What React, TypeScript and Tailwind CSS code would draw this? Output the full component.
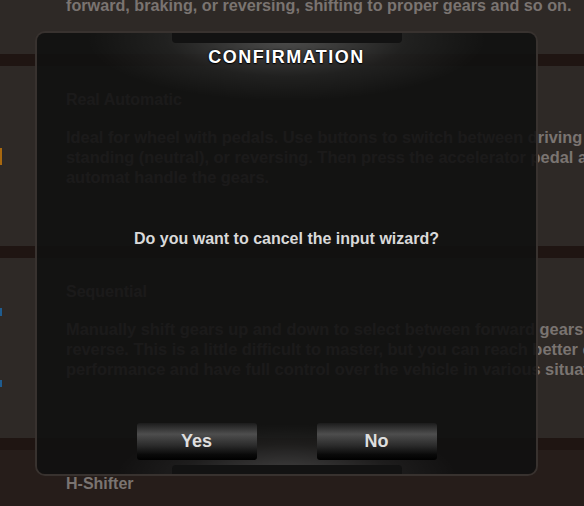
import React from 'react';

// Settings list sitting behind the dialog
const SECTIONS = [
  {
    title: 'Real Automatic',
    lines: [
      'Ideal for wheel with pedals. Use buttons to switch between driving forward,',
      'standing (neutral), or reversing. Then press the accelerator pedal and let the',
      'automat handle the gears.',
    ],
    bits: [{ top: 'mt-[82px]', h: 'h-[17px]', color: 'bg-[#a8680f]' }],
    bg: 'bg-[#2e2926]',
  },
  {
    title: 'Sequential',
    lines: [
      'Manually shift gears up and down to select between forward gears, neutral or',
      'reverse. This is a little difficult to master, but you can reach better control,',
      'performance and have full control over the vehicle in various situations.',
    ],
    bits: [
      { top: 'mt-[50px]', h: 'h-[8px]', color: 'bg-[#1f5c8f]' },
      { top: 'mt-[64px]', h: 'h-[7px]', color: 'bg-[#1f5c8f]' },
    ],
    bg: 'bg-[#2e2926]',
  },
  {
    title: 'H-Shifter',
    lines: [],
    bits: [],
    bg: 'bg-[#261d1a]',
  },
];

function DialogButton({ label }: { label: string }) {
  return (
    <button className="w-[120px] h-[37px] rounded-[3px] bg-[linear-gradient(to_bottom,#1c1c1c_0%,#4e4e4e_30%,#2c2c2c_60%,#0a0a0a_85%,#000_100%)] text-[18px] leading-[37px] font-bold text-[#dedede]">
      {label}
    </button>
  );
}

export default function App() {
  return (
    <div className="relative w-[584px] h-[506px] overflow-hidden bg-[#2e2926] font-['Liberation_Sans',Arial,sans-serif] font-bold">

      {/* tail of the previous entry */}
      <div className="h-[54px] pl-[66px] overflow-hidden">
        <p className="-mt-[5px] text-[16.2px] leading-[20px] text-[#7a7471] whitespace-nowrap">
          forward, braking, or reversing, shifting to proper gears and so on.
        </p>
      </div>

      {SECTIONS.map((s) => (
        <section key={s.title} className={s.bg}>
          <div className="h-[12px] bg-[#1f1512]" />
          <div className="flex h-[180px]">
            <div className="w-[2px] flex flex-col">
              {s.bits.map((b, i) => (
                <div key={i} className={`${b.top} ${b.h} ${b.color} w-[2px]`} />
              ))}
            </div>
            <div className="pl-[64px] pt-[24px] text-[#7a7471] whitespace-nowrap">
              <h3 className="text-[16px] leading-[20px]">{s.title}</h3>
              {s.lines.length > 0 && (
                <div className="mt-[17px] text-[16.4px] leading-[20px]">
                  {s.lines.map((l) => (
                    <p key={l}>{l}</p>
                  ))}
                </div>
              )}
            </div>
          </div>
        </section>
      ))}

      {/* Confirmation dialog */}
      <div className="absolute left-[35px] top-[31px] w-[503px] h-[445px] rounded-[10px] border-2 border-[#38322f] overflow-hidden">
        <div className="flex flex-col items-center h-full bg-[#111111]/90 bg-[radial-gradient(ellipse_200px_62px_at_50%_6px,rgba(255,255,255,0.25),rgba(255,255,255,0.06)_60%,transparent),radial-gradient(ellipse_170px_50px_at_50%_100%,rgba(255,255,255,0.2),rgba(255,255,255,0.05)_60%,transparent)]">
          <div className="w-[230px] h-[10px] rounded-b-[4px] bg-[#121212]" />
          <h2 className="mt-[3px] text-[18px] leading-[22px] tracking-[1.5px] text-white [text-shadow:0_0_2px_#000,0_1px_1px_#000]">
            CONFIRMATION
          </h2>
          <p className="mt-[161px] text-[16px] leading-[20px] text-[#d9d9d9]">
            Do you want to cancel the input wizard?
          </p>
          <div className="mt-[174px] flex gap-[60px]">
            <DialogButton label="Yes" />
            <DialogButton label="No" />
          </div>
          <div className="mt-[5px] w-[230px] h-[10px] rounded-t-[4px] bg-[#121212]" />
        </div>
      </div>
    </div>
  );
}
